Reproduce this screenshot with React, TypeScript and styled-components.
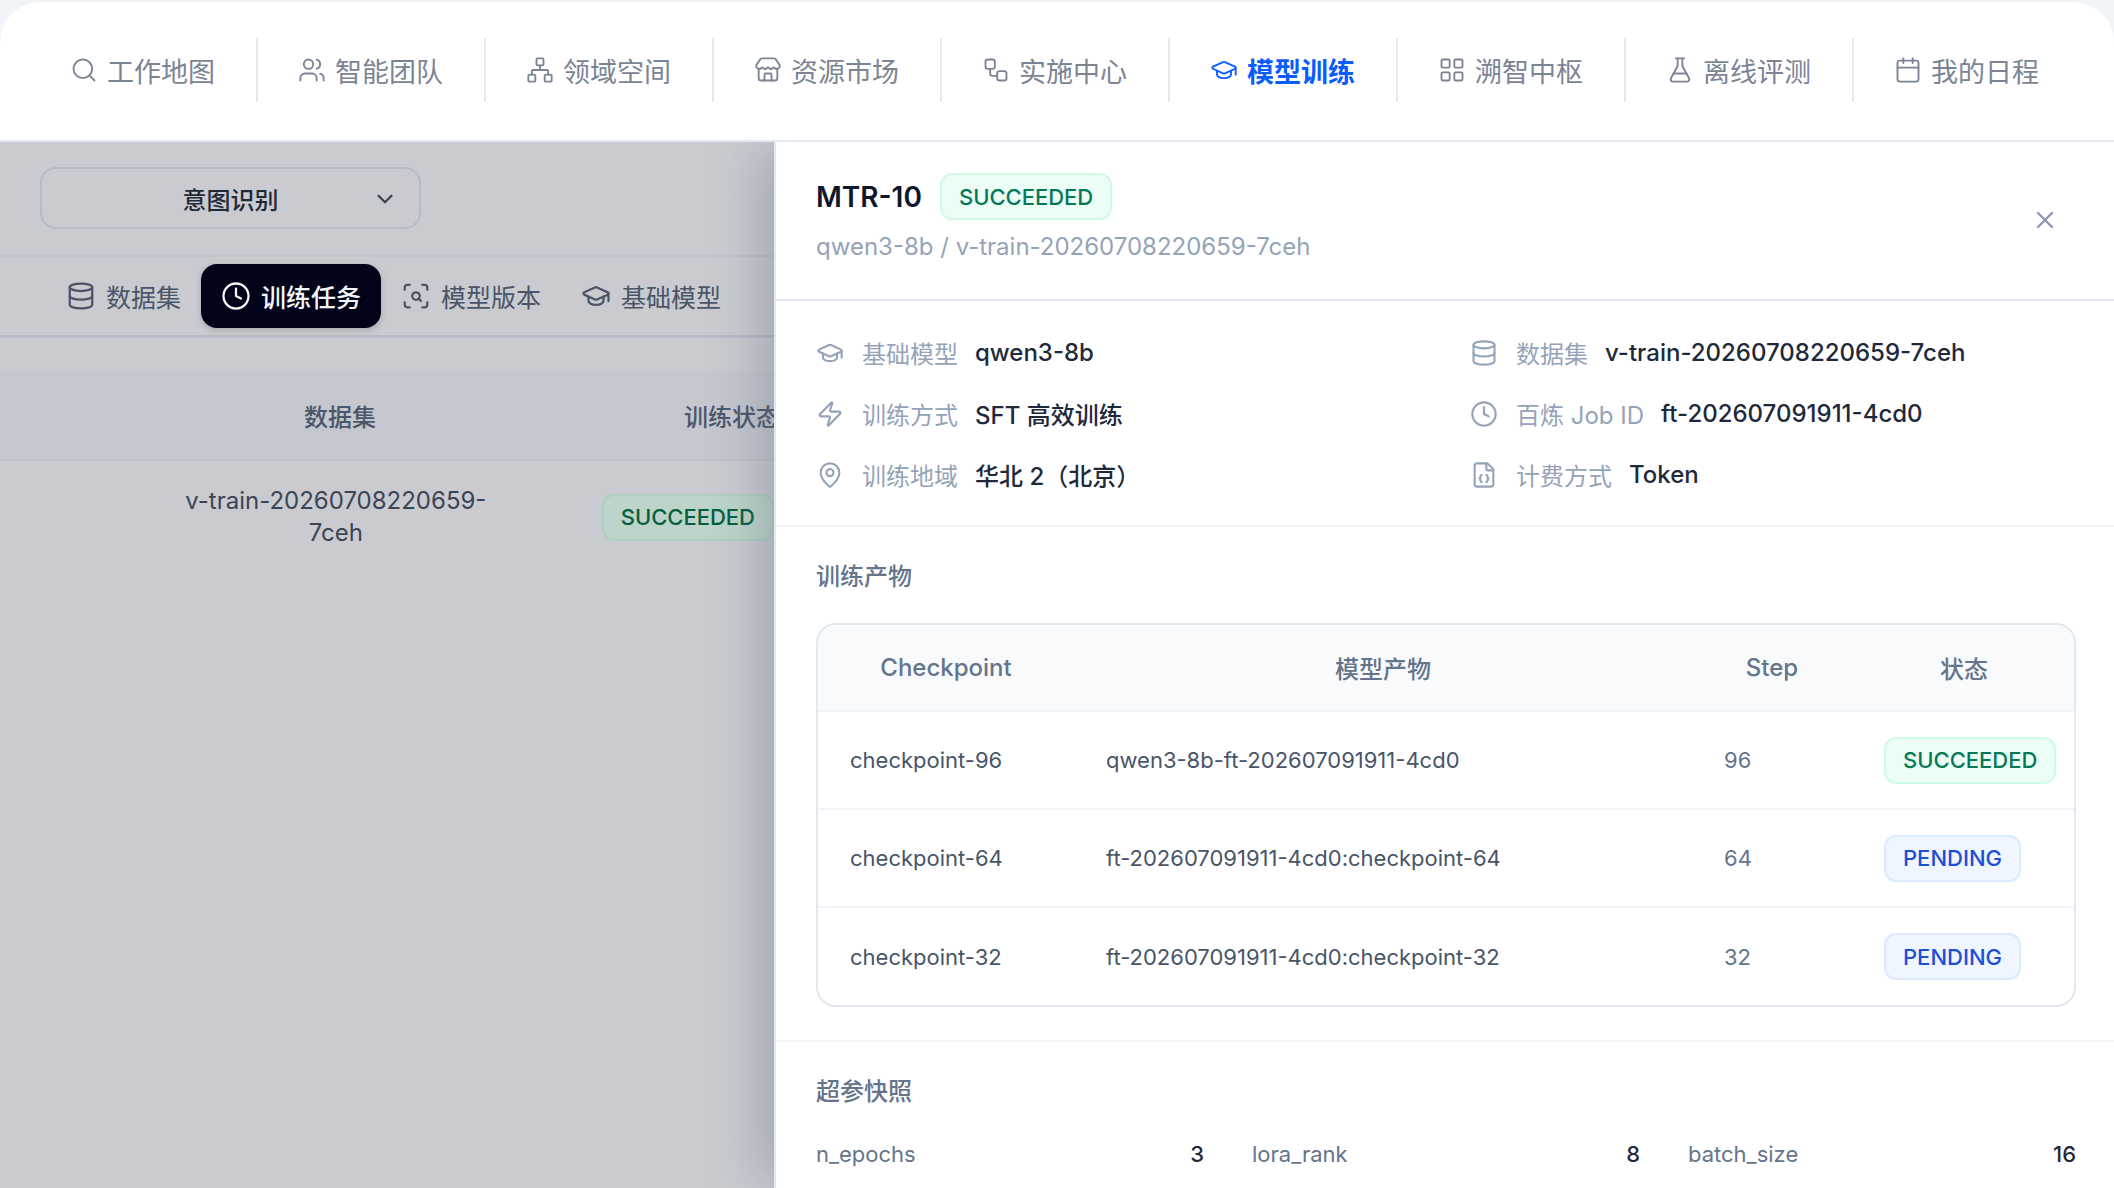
import React from 'react';
import styled, {createGlobalStyle} from 'styled-components';
import {
  Boxes, Calendar, Check, ChevronDown, Clock, Database, FileJson, FlaskConical, GraduationCap,
  LayoutGrid, MapPin, Network, Search, Store, Users, Workflow, X, Zap, ScanSearch
} from 'lucide-react';

const FONT = `Inter, "Noto Sans CJK SC", "Noto Sans", sans-serif`;

const GlobalStyle = createGlobalStyle`
  html, body { margin: 0; padding: 0; background: #f1f5f9; }
  body { font-family: ${FONT}; width: 2114px; height: 1188px; overflow: hidden; }
  * { box-sizing: border-box; }
`;

const Shell = styled.div`
  width: 2114px;
  height: 1188px;
  background: #fff;
  border-radius: 40px 40px 0 0;
  box-shadow: inset 0 2px 0 #eef2f7;
  display: flex;
  flex-direction: column;
  overflow: hidden;
`;

const TopNav = styled.nav`
  height: 142px;
  flex: none;
  display: flex;
  align-items: center;
  padding: 0 30px;
  border-bottom: 2px solid #e2e8f0;
`;

const NavItem = styled.div<{$active?: boolean; $last?: boolean}>`
  width: 228px;
  height: 64px;
  flex: none;
  display: flex;
  align-items: center;
  gap: 9px;
  padding-left: 40px;
  border-right: ${p => (p.$last ? 'none' : '2px solid #e2e8f0')};
  font-size: 27px;
  font-weight: ${p => (p.$active ? 600 : 400)};
  color: ${p => (p.$active ? '#0b5cff' : '#7b8494')};
  white-space: nowrap;
`;

const Body = styled.div`
  flex: 1;
  display: flex;
  min-height: 0;
`;

const LeftPane = styled.section`
  width: 774px;
  flex: none;
  background: #c9cbd0;
  overflow: hidden;
`;

const SelectRow = styled.div`
  height: 113px;
  padding: 25px 40px 0;
`;

const SelectBox = styled.div`
  width: 381px;
  height: 62px;
  position: relative;
  display: flex;
  align-items: center;
  justify-content: center;
  padding-right: 0;
  border: 2px solid #b6bbc7;
  border-radius: 16px;
  font-size: 24px;
  font-weight: 500;
  color: #1f2937;
  > svg {
    position: absolute;
    right: 21px;
    top: 17px;
    color: #374151;
  }
`;

const TabBar = styled.div`
  height: 83px;
  display: flex;
  align-items: center;
  gap: 0;
  padding-left: 46px;
  border-top: 2px solid #bfc3cc;
  border-bottom: 3px solid #b6bbc7;
  white-space: nowrap;
`;

const Tab = styled.div<{$active?: boolean}>`
  height: 64px;
  flex: none;
  display: flex;
  align-items: center;
  gap: 10px;
  padding: 0 20px;
  border-radius: 16px;
  font-size: 25px;
  font-weight: ${p => (p.$active ? 500 : 400)};
  color: ${p => (p.$active ? '#f5f6f8' : '#4a5568')};
  background: ${p => (p.$active ? '#02041a' : 'transparent')};
  box-shadow: ${p => (p.$active ? '0 2px 6px rgba(0,0,0,.18)' : 'none')};
`;

const LeftTable = styled.div`
  margin-top: 33px;
`;

const LeftHead = styled.div`
  height: 90px;
  display: grid;
  grid-template-columns: 520px 1fr;
  grid-auto-flow: column;
  align-items: center;
  padding-left: 160px;
  background: #c4c7ce;
  border-bottom: 2px solid #c0c3ca;
  font-size: 24px;
  font-weight: 500;
  color: #4b5669;
  white-space: nowrap;
`;

const LeftHeadCell = styled.div<{$w: number}>`
  width: ${p => p.$w}px;
  text-align: center;
`;

const LeftRow = styled.div`
  display: flex;
  align-items: center;
  padding: 24px 0 0 160px;
  font-size: 24px;
  line-height: 32px;
  color: #3a4556;
`;

const LeftDataset = styled.div`
  width: 360px;
  text-align: center;
  margin-right: 90px;
`;

const Drawer = styled.aside`
  width: 1340px;
  flex: none;
  background: #fff;
  border-left: 2px solid #e2e8f0;
  box-shadow: -24px 0 44px -8px rgba(100, 106, 125, 0.34);
  position: relative;
  overflow: hidden;
  clip-path: inset(0 0 0 -80px);
`;

const DrawerHead = styled.header`
  height: 159px;
  padding: 31px 40px 0 40px;
  border-bottom: 2px solid #e2e8f0;
  position: relative;
`;

const TitleRow = styled.div`
  display: flex;
  align-items: center;
  gap: 18px;
`;

const Title = styled.h2`
  margin: 0;
  font-size: 28px;
  font-weight: 600;
  color: #0f172a;
`;

const Badge = styled.span<{$tone: 'ok' | 'wait'; $dim?: boolean}>`
  display: inline-flex;
  align-items: center;
  height: 47px;
  padding: 0 17px;
  border-radius: 12px;
  font-size: 22px;
  font-weight: 500;
  white-space: nowrap;
  border: 2px solid ${p => (p.$tone === 'ok' ? '#d1fae5' : '#dbeafe')};
  background: ${p => (p.$tone === 'ok' ? '#ecfdf5' : '#eff6ff')};
  color: ${p => (p.$tone === 'ok' ? '#047857' : '#1d4ed8')};
`;

const DimBadge = styled(Badge)`
  border-color: #aed0bf;
  background: #bcd4c9;
  color: #05603f;
`;

const SubTitle = styled.div`
  margin-top: 9px;
  font-size: 24px;
  line-height: 36px;
  color: #94a3b8;
`;

const CloseButton = styled.button`
  position: absolute;
  right: 55px;
  top: 64px;
  width: 28px;
  height: 28px;
  padding: 0;
  border: 0;
  background: none;
  color: #8a9ab2;
`;

const InfoGrid = styled.div`
  display: grid;
  grid-template-columns: 1fr 1fr;
  column-gap: 48px;
  padding: 21px 38px 20px 40px;
  border-bottom: 2px solid #f1f5f9;
`;

const InfoRow = styled.div`
  height: 61px;
  display: flex;
  align-items: center;
  font-size: 24px;
  white-space: nowrap;
  > svg { color: #94a3b8; flex: none; }
`;

const InfoLabel = styled.span`
  margin-left: 18px;
  color: #94a3b8;
`;

const InfoValue = styled.span`
  margin-left: 17px;
  color: #1e293b;
  font-weight: 500;
`;

const Section = styled.div`
  padding: 32px 38px 33px 40px;
`;

const SectionTop = styled(Section)`
  border-bottom: 2px solid #f1f5f9;
`;

const SectionTitle = styled.div`
  font-size: 24px;
  line-height: 36px;
  font-weight: 500;
  color: #64748b;
  margin-bottom: 28px;
`;

const TableWrap = styled.div`
  border: 2px solid #e2e8f0;
  border-radius: 20px;
  overflow: hidden;
`;

const Table = styled.table`
  width: 100%;
  border-collapse: collapse;
  table-layout: fixed;
`;

const Th = styled.th`
  height: 86px;
  background: #f8fafc;
  border-bottom: 2px solid #f1f5f9;
  font-size: 24px;
  font-weight: 500;
  color: #64748b;
  text-align: center;
`;

const Tr = styled.tr`
  height: 98px;
  & + & > td { border-top: 2px solid #f1f5f9; }
`;

const Td = styled.td<{$muted?: boolean}>`
  padding: 0 32px;
  font-size: 22px;
  color: ${p => (p.$muted ? '#64748b' : '#475569')};
  white-space: nowrap;
`;

const ParamGrid = styled.div`
  display: grid;
  grid-template-columns: repeat(3, 1fr);
  column-gap: 48px;
`;

const ParamItem = styled.div`
  display: flex;
  justify-content: space-between;
  font-size: 22px;
  line-height: 32px;
`;

const ParamKey = styled.span`
  color: #64748b;
`;

const ParamValue = styled.span`
  color: #1e293b;
  font-weight: 500;
`;

const navs = [
  {label: '工作地图', icon: Search},
  {label: '智能团队', icon: Users},
  {label: '领域空间', icon: Network},
  {label: '资源市场', icon: Store},
  {label: '实施中心', icon: Workflow},
  {label: '模型训练', icon: GraduationCap, active: true},
  {label: '溯智中枢', icon: LayoutGrid},
  {label: '离线评测', icon: FlaskConical},
  {label: '我的日程', icon: Calendar}
];

const info = [
  {icon: GraduationCap, label: '基础模型', value: 'qwen3-8b'},
  {icon: Database, label: '数据集', value: 'v-train-20260708220659-7ceh'},
  {icon: Zap, label: '训练方式', value: 'SFT 高效训练'},
  {icon: Clock, label: '百炼 Job ID', value: 'ft-202607091911-4cd0'},
  {icon: MapPin, label: '训练地域', value: '华北 2（北京）'},
  {icon: FileJson, label: '计费方式', value: 'Token'}
];

const checkpoints = [
  {name: 'checkpoint-96', artifact: 'qwen3-8b-ft-202607091911-4cd0', step: 96, status: 'SUCCEEDED'},
  {name: 'checkpoint-64', artifact: 'ft-202607091911-4cd0:checkpoint-64', step: 64, status: 'PENDING'},
  {name: 'checkpoint-32', artifact: 'ft-202607091911-4cd0:checkpoint-32', step: 32, status: 'PENDING'}
];

const params = [
  ['n_epochs', '3'],
  ['lora_rank', '8'],
  ['batch_size', '16']
];

export default function App() {
  return (
    <Shell>
      <GlobalStyle/>
      <TopNav>
        {navs.map((n, i) => {
          const Icon = n.icon;
          return (
            <NavItem key={n.label} $active={n.active} $last={i === navs.length - 1}>
              <Icon size={28} strokeWidth={1.6}/>
              {n.label}
            </NavItem>
          );
        })}
      </TopNav>
      <Body>
        <LeftPane>
          <SelectRow>
            <SelectBox>
              意图识别
              <ChevronDown size={26} strokeWidth={2}/>
            </SelectBox>
          </SelectRow>
          <TabBar>
            <Tab><Database size={30} strokeWidth={1.8}/>数据集</Tab>
            <Tab $active><Clock size={30} strokeWidth={1.8}/>训练任务</Tab>
            <Tab><ScanSearch size={30} strokeWidth={1.8}/>模型版本</Tab>
            <Tab><GraduationCap size={30} strokeWidth={1.8}/>基础模型</Tab>
          </TabBar>
          <LeftTable>
            <LeftHead>
              <LeftHeadCell $w={360}>数据集</LeftHeadCell>
              <LeftHeadCell $w={104}>训练状态</LeftHeadCell>
            </LeftHead>
            <LeftRow>
              <LeftDataset>v-train-20260708220659-7ceh</LeftDataset>
              <DimBadge $tone="ok">SUCCEEDED</DimBadge>
            </LeftRow>
          </LeftTable>
        </LeftPane>
        <Drawer>
          <DrawerHead>
            <TitleRow>
              <Title>MTR-10</Title>
              <Badge $tone="ok">SUCCEEDED</Badge>
            </TitleRow>
            <SubTitle>qwen3-8b / v-train-20260708220659-7ceh</SubTitle>
            <CloseButton><X size={28} strokeWidth={2}/></CloseButton>
          </DrawerHead>
          <InfoGrid>
            {info.map(row => {
              const Icon = row.icon;
              return (
                <InfoRow key={row.label}>
                  <Icon size={28} strokeWidth={1.8}/>
                  <InfoLabel>{row.label}</InfoLabel>
                  <InfoValue>{row.value}</InfoValue>
                </InfoRow>
              );
            })}
          </InfoGrid>
          <SectionTop>
            <SectionTitle>训练产物</SectionTitle>
            <TableWrap>
              <Table>
                <colgroup>
                  <col style={{width: 256}}/>
                  <col style={{width: 618}}/>
                  <col style={{width: 160}}/>
                  <col style={{width: 224}}/>
                </colgroup>
                <thead>
                  <tr>
                    <Th>Checkpoint</Th>
                    <Th>模型产物</Th>
                    <Th>Step</Th>
                    <Th>状态</Th>
                  </tr>
                </thead>
                <tbody>
                  {checkpoints.map(c => (
                    <Tr key={c.name}>
                      <Td>{c.name}</Td>
                      <Td>{c.artifact}</Td>
                      <Td $muted>{c.step}</Td>
                      <Td><Badge $tone={c.status === 'SUCCEEDED' ? 'ok' : 'wait'}>{c.status}</Badge></Td>
                    </Tr>
                  ))}
                </tbody>
              </Table>
            </TableWrap>
          </SectionTop>
          <Section>
            <SectionTitle>超参快照</SectionTitle>
            <ParamGrid>
              {params.map(([k, v]) => (
                <ParamItem key={k}>
                  <ParamKey>{k}</ParamKey>
                  <ParamValue>{v}</ParamValue>
                </ParamItem>
              ))}
            </ParamGrid>
          </Section>
        </Drawer>
      </Body>
    </Shell>
  );
}
